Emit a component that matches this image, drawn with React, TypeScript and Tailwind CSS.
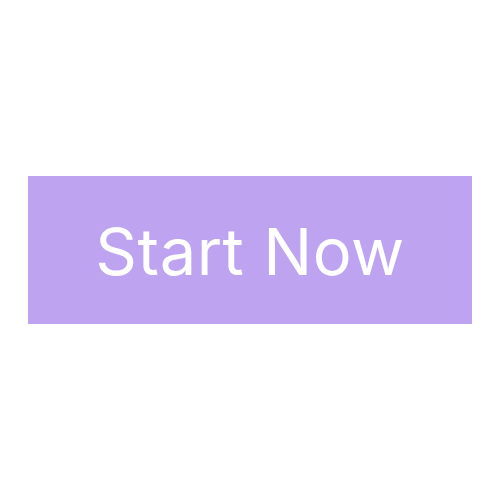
export default function App() {
  return (
    <div className="flex h-[500px] w-[500px] items-center justify-center bg-white">
      <button
        type="button"
        className="flex h-[148px] w-[444px] items-center justify-center bg-[#bda3f0] pt-[2px] font-['Inter',sans-serif] text-[65px] font-normal leading-none tracking-[0.5px] text-white"
      >
        Start Now
      </button>
    </div>
  );
}
